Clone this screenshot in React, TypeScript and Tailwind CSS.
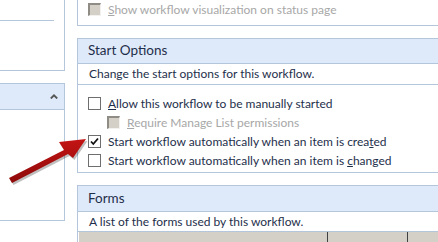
import React from "react";

const border = "border-[#b3c6db]";

function Box({ checked, disabled }: { checked?: boolean; disabled?: boolean }) {
  if (disabled) {
    return (
      <span className="w-[13px] h-[13px] shrink-0 border-t-2 border-l-2 border-r border-b border-t-[#8f8c86] border-l-[#8f8c86] border-r-[#f2f1ee] border-b-[#f2f1ee] bg-[#d4d0c8]" />
    );
  }
  return (
    <span className="w-[13px] h-[13px] shrink-0 border border-[#6e6e6e] bg-white flex items-center justify-center">
      {checked && (
        <svg width="9" height="9" viewBox="0 0 9 9">
          <path d="M1 4.5 L3.3 7 L8 1.5" fill="none" stroke="#111" strokeWidth="1.8" />
        </svg>
      )}
    </span>
  );
}

function Row({
  label,
  checked,
  disabled,
  indent,
}: {
  label: React.ReactNode;
  checked?: boolean;
  disabled?: boolean;
  indent?: boolean;
}) {
  return (
    <div className={`flex items-center gap-[7px] h-[19px] ${indent ? "pl-[29px]" : "pl-[10px]"}`}>
      <Box checked={checked} disabled={disabled} />
      <span className={disabled ? "text-[#a7a7a7]" : "text-[#1e2f4b]"}>{label}</span>
    </div>
  );
}

export default function App() {
  return (
    <div
      className="relative w-[438px] h-[242px] overflow-hidden bg-white text-[12px] leading-none"
      style={{ fontFamily: 'Lato, "Noto Sans", sans-serif' }}
    >
      <div className="flex h-full">
        {/* left column */}
        <div className="w-[65px] shrink-0 flex flex-col">
          <div className={`h-[71px] border-r border-b ${border} pt-[20px] pr-[10px]`}>
            <div className={`border-t ${border}`} />
          </div>
          <div className={`mt-[12px] h-[138px] border-r border-t border-b ${border}`}>
            <div className={`h-[26px] bg-[#deeaf9] border-b ${border} flex items-center justify-end pr-[6px]`}>
              <svg width="8" height="5" viewBox="0 0 8 5">
                <path d="M0.8 4.5 L4 1.3 L7.2 4.5" fill="none" stroke="#555" strokeWidth="1.8" />
              </svg>
            </div>
          </div>
        </div>

        {/* right column */}
        <div className="ml-[12px] flex-1 flex flex-col">
          <div className={`h-[27px] border-l border-b ${border}`}>
            <Row disabled label={<><u>S</u>how workflow visualization on status page</>} />
          </div>

          <div className={`mt-[12px] h-[139px] border-l border-t border-b ${border}`}>
            <div className={`h-[25px] bg-[#deeaf9] border-b ${border} flex items-center pl-[10px] text-[13.5px] text-[#1e2f4b]`}>
              Start Options
            </div>
            <div className={`h-[21px] border-b ${border} flex items-center pl-[11px] text-[#1e2f4b]`}>
              Change the start options for this workflow.
            </div>
            <div className="pt-[9px]">
              <Row label={<><u>A</u>llow this workflow to be manually started</>} />
              <Row indent disabled label={<><u>R</u>equire Manage List permissions</>} />
              <Row checked label={<>Start workflow automatically when an item is crea<u>t</u>ed</>} />
              <Row label={<>Start workflow automatically when an item is <u>c</u>hanged</>} />
            </div>
          </div>

          <div className={`mt-[12px] flex-1 border-l border-t ${border}`}>
            <div className={`h-[26px] bg-[#deeaf9] border-b ${border} flex items-center pl-[10px] text-[13.5px] text-[#1e2f4b]`}>
              Forms
            </div>
            <div className={`h-[20px] border-b ${border} flex items-center pl-[11px] text-[#1e2f4b]`}>
              A list of the forms used by this workflow.
            </div>
            <div className="flex h-[10px] bg-[#d4d0c8] ml-[1px]">
              <div className="w-[249px] border-r border-[#404040]" />
              <div className="w-[80px] border-r border-[#404040]" />
            </div>
          </div>
        </div>
      </div>

      {/* annotation arrow */}
      <svg className="absolute left-0 top-0" width="438" height="242" viewBox="0 0 438 242">
        <defs>
          <linearGradient id="ar" x1="0" y1="0" x2="0" y2="1">
            <stop offset="0" stopColor="#c41414" />
            <stop offset="1" stopColor="#8e0a0a" />
          </linearGradient>
        </defs>
        <path
          d="M12 183 L9 178 L64 150 L59 142 L86 139 L73 158 L68 154 Z"
          fill="#000"
          opacity="0.25"
          transform="translate(1.5 2)"
        />
        <path d="M12 183 L9 178 L64 150 L59 142 L86 139 L73 158 L68 154 Z" fill="url(#ar)" />
      </svg>
    </div>
  );
}
